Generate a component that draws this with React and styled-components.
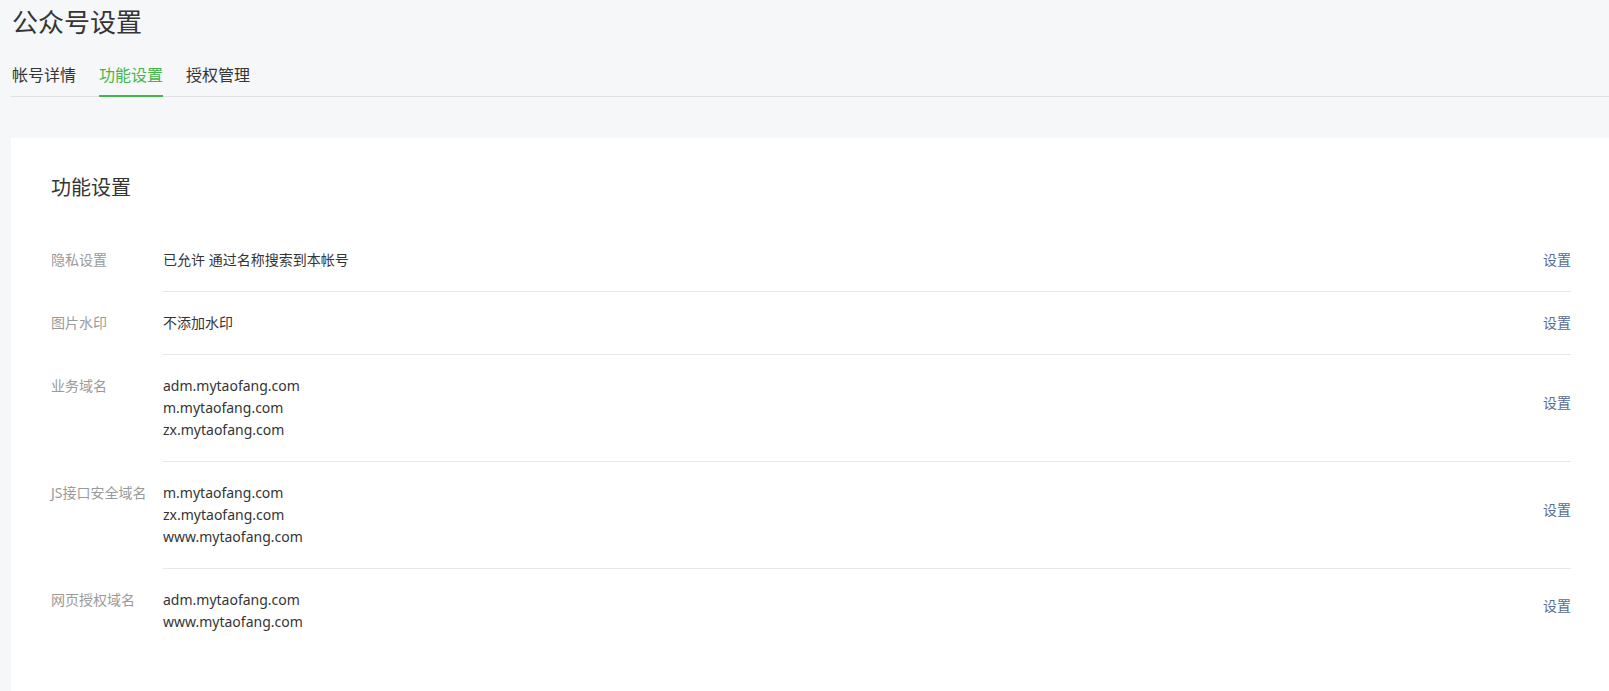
import React from 'react';
import styled, { createGlobalStyle } from 'styled-components';

const PageStyle = createGlobalStyle`
  body {
    margin: 0;
    background-color: #f6f7f9;
    font-family: "Noto Sans", "Noto Sans CJK SC", sans-serif;
    color: #353535;
    overflow: hidden;
  }
`;

const Page = styled.div`
  width: 1600px;
  padding: 4px 0 0 11px;
`;

const PageTitle = styled.h1`
  margin: 0 0 15px 1px;
  font-size: 26px;
  line-height: 36px;
  font-weight: 400;
  color: #353535;
`;

const TabBar = styled.nav`
  display: flex;
  gap: 23px;
  border-bottom: 1px solid #dfe0e3;
`;

const Tab = styled.a`
  font-size: 16px;
  line-height: 40px;
  margin-bottom: -1px;
  padding-left: ${p => (p.$first ? '1px' : '0')};
  border-bottom: 2px solid ${p => (p.$active ? '#44b549' : 'transparent')};
  color: ${p => (p.$active ? '#44b549' : '#353535')};
  cursor: pointer;
`;

const Card = styled.section`
  margin-top: 41px;
  background: #fff;
  padding: 36px 40px 40px;
`;

const CardTitle = styled.h2`
  margin: 0 0 27px;
  font-size: 20px;
  line-height: 28px;
  font-weight: 400;
  color: #353535;
`;

const Row = styled.div`
  display: flex;
  font-size: 14px;
  line-height: 22px;
`;

const Label = styled.div`
  width: 112px;
  flex-shrink: 0;
  padding: 20px 0;
  color: #9a9a9a;
`;

const Body = styled.div`
  flex: 1;
  display: flex;
  align-items: center;
  padding: 20px 0;
  border-bottom: ${p => (p.$last ? 'none' : '1px solid #e7e7eb')};
`;

const Values = styled.div`
  flex: 1;
  color: #353535;
`;

const Action = styled.a`
  color: #576b95;
  cursor: pointer;
  margin-bottom: ${p => (p.$multi ? '10px' : '0')};
`;

const tabs = ['帐号详情', '功能设置', '授权管理'];

const settings = [
  { label: '隐私设置', values: ['已允许 通过名称搜索到本帐号'] },
  { label: '图片水印', values: ['不添加水印'] },
  { label: '业务域名', values: ['adm.mytaofang.com', 'm.mytaofang.com', 'zx.mytaofang.com'] },
  { label: 'JS接口安全域名', values: ['m.mytaofang.com', 'zx.mytaofang.com', 'www.mytaofang.com'] },
  { label: '网页授权域名', values: ['adm.mytaofang.com', 'www.mytaofang.com'] },
];

const App = () => {
  return (
    <>
      <PageStyle />
      <Page>
        <PageTitle>公众号设置</PageTitle>
        <TabBar>
          {tabs.map((t, i) => (
            <Tab key={t} $first={i === 0} $active={t === '功能设置'}>{t}</Tab>
          ))}
        </TabBar>
        <Card>
          <CardTitle>功能设置</CardTitle>
          {settings.map((s, i) => (
            <Row key={s.label}>
              <Label>{s.label}</Label>
              <Body $last={i === settings.length - 1}>
                <Values>
                  {s.values.map(v => (
                    <div key={v}>{v}</div>
                  ))}
                </Values>
                <Action $multi={s.values.length > 1}>设置</Action>
              </Body>
            </Row>
          ))}
        </Card>
      </Page>
    </>
  );
};

export default App;
